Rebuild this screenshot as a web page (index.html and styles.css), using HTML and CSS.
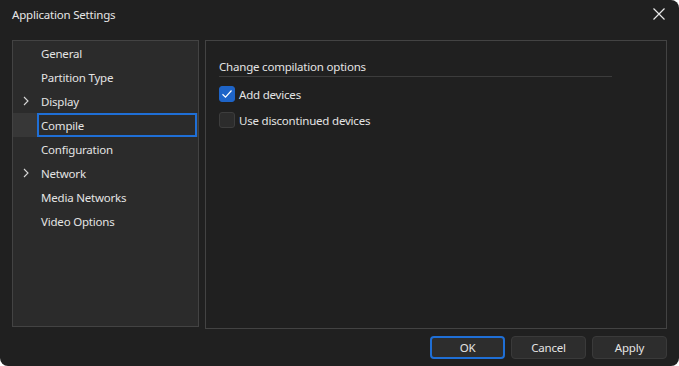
FILE: index.html
```html
<!DOCTYPE html>
<html>
<head>
<meta charset="utf-8">
<link rel="stylesheet" href="styles.css">
</head>
<body>
<div class="window">
  <div class="titlebar">
    <span class="title">Application Settings</span>
    <button class="close" aria-label="Close">
      <svg width="12" height="12" viewBox="0 0 12 12"><path d="M0.5 0.5 L11.5 11.5 M11.5 0.5 L0.5 11.5" stroke="#e8e8e8" stroke-width="1.2" fill="none"/></svg>
    </button>
  </div>
  <div class="main">
    <nav class="nav">
      <div class="item"><span class="chev"></span><span class="label">General</span></div>
      <div class="item"><span class="chev"></span><span class="label">Partition Type</span></div>
      <div class="item"><span class="chev"><svg width="6" height="10" viewBox="0 0 6 10"><path d="M1 1 L5 5 L1 9" stroke="#d8d8d8" stroke-width="1.1" fill="none"/></svg></span><span class="label">Display</span></div>
      <div class="item selected"><span class="chev"></span><span class="label">Compile</span></div>
      <div class="item"><span class="chev"></span><span class="label">Configuration</span></div>
      <div class="item"><span class="chev"><svg width="6" height="10" viewBox="0 0 6 10"><path d="M1 1 L5 5 L1 9" stroke="#d8d8d8" stroke-width="1.1" fill="none"/></svg></span><span class="label">Network</span></div>
      <div class="item"><span class="chev"></span><span class="label">Media Networks</span></div>
      <div class="item"><span class="chev"></span><span class="label">Video Options</span></div>
    </nav>
    <section class="content">
      <div class="heading">Change compilation options</div>
      <label class="check">
        <span class="box checked"><svg width="16" height="16" viewBox="0 0 16 16"><path d="M3.5 8.3 L6.5 11.2 L12.5 4.5" stroke="#ffffff" stroke-width="1.2" fill="none"/></svg></span>
        <span class="ctext">Add devices</span>
      </label>
      <label class="check">
        <span class="box"></span>
        <span class="ctext">Use discontinued devices</span>
      </label>
    </section>
  </div>
  <div class="footer">
    <button class="btn primary">OK</button>
    <button class="btn">Cancel</button>
    <button class="btn">Apply</button>
  </div>
</div>
</body>
</html>
```
FILE: styles.css
```css
html, body {
  margin: 0;
  padding: 0;
  background: #ffffff;
}
body {
  width: 679px;
  height: 366px;
  overflow: hidden;
  font-family: "Noto Sans", "Open Sans", sans-serif;
  font-size: 11.5px;
  letter-spacing: -0.2px;
  color: #e4e4e4;
}
.window {
  width: 679px;
  height: 366px;
  background: #202020;
  border-radius: 0 8px 8px 8px;
  display: flex;
  flex-direction: column;
  box-sizing: border-box;
}
.titlebar {
  height: 28px;
  display: flex;
  align-items: center;
  justify-content: space-between;
  padding: 0 14px 0 12px;
  flex: none;
}
.title {
  line-height: 16px;
  padding-top: 1px;
  color: #e6e6e6;
}
.close {
  background: none;
  border: 0;
  padding: 0;
  width: 12px;
  height: 12px;
  display: flex;
}
.main {
  display: flex;
  gap: 6px;
  padding: 12px 12px 0 12px;
  align-items: flex-start;
  flex: none;
}
.nav {
  width: 187px;
  height: 287px;
  box-sizing: border-box;
  border: 1px solid #434343;
  background: #2b2b2b;
  display: flex;
  flex-direction: column;
}
.item {
  height: 24px;
  display: flex;
  align-items: stretch;
  flex: none;
}
.chev {
  width: 24px;
  display: flex;
  align-items: center;
  justify-content: center;
  padding-left: 1px;
  box-sizing: border-box;
  flex: none;
}
.label {
  flex: 1;
  margin-right: 1px;
  padding-left: 4px;
  padding-top: 1px;
  box-sizing: border-box;
  display: flex;
  align-items: center;
  line-height: 16px;
  color: #e4e4e4;
  border: 2px solid transparent;
  margin-left: -2px;
}
.item.selected {
  background: #373737;
}
.item.selected .label {
  border-color: #1f6fd6;
  background: #2b2b2b;
  margin-left: 0;
  padding-left: 2px;
}
.content {
  width: 462px;
  height: 289px;
  box-sizing: border-box;
  border: 1px solid #434343;
  background: #202020;
  padding: 18px 13px 0 13px;
  display: flex;
  flex-direction: column;
  gap: 10px;
}
.heading {
  width: 393px;
  line-height: 16px;
  padding-bottom: 1px;
  border-bottom: 1px solid #3c3c3c;
  margin-bottom: -1px;
  color: #e4e4e4;
}
.check {
  display: flex;
  align-items: center;
  gap: 4px;
  height: 16px;
  line-height: 16px;
  color: #e4e4e4;
}
.ctext {
  padding-top: 1px;
  margin-bottom: -1px;
}
.box {
  width: 16px;
  height: 16px;
  box-sizing: border-box;
  border-radius: 3px;
  background: #2c2c2c;
  border: 1px solid #3d3d3d;
  display: flex;
  flex: none;
}
.box.checked {
  background: #1e64c8;
  border-color: #1e64c8;
}
.box svg {
  margin: -1px;
}
.footer {
  display: flex;
  justify-content: flex-end;
  gap: 6px;
  padding: 7px 12px 0 12px;
}
.btn {
  width: 75px;
  height: 23px;
  box-sizing: border-box;
  background: #2d2d2d;
  border: 1px solid #3a3a3a;
  border-radius: 4px;
  color: #e4e4e4;
  font-family: "Noto Sans", "Open Sans", sans-serif;
  font-size: 11.5px;
  letter-spacing: -0.2px;
  padding: 1px 0 0 0;
  line-height: 16px;
}
.btn.primary {
  border: 2px solid #1f6fd6;
}
```
